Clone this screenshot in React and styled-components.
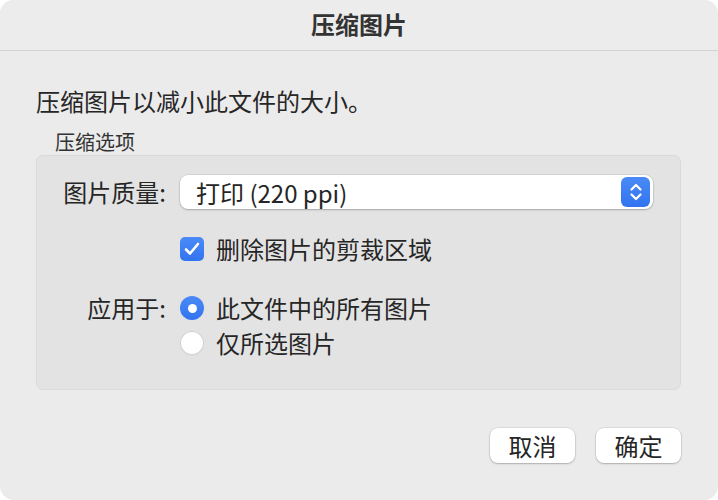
import React from "react";
import styled, { createGlobalStyle } from "styled-components";

const Global = createGlobalStyle`
  html, body { margin: 0; padding: 0; background: #ffffff; }
  body { font-family: "Noto Sans CJK SC", "Noto Sans", sans-serif; color: #262626; }
  * { box-sizing: border-box; }
`;

const Window = styled.div`
  width: 718px;
  height: 500px;
  border-radius: 14px;
  background: #ebebeb;
  overflow: hidden;
  display: flex;
  flex-direction: column;
`;

const TitleBar = styled.div`
  height: 51px;
  flex: none;
  background: #ececec;
  border-bottom: 1px solid #d3d3d3;
  display: flex;
  align-items: center;
  justify-content: center;
  font-size: 24px;
  font-weight: 600;
  color: #333333;
  padding-bottom: 4px;
`;

const Body = styled.div`
  padding: 35px 37px 0 36px;
  display: flex;
  flex-direction: column;
`;

const Intro = styled.div`
  font-size: 24px;
  line-height: 30px;
  margin-left: 0;
  color: #262626;
`;

const SectionLabel = styled.div`
  font-size: 20px;
  line-height: 24px;
  margin: 14px 0 1px 19px;
  color: #333333;
`;

const Panel = styled.div`
  height: 235px;
  background: #e3e3e3;
  border: 1px solid #dadada;
  border-radius: 7px;
  padding: 19px 27px 0 0;
  display: flex;
  flex-direction: column;
`;

const Row = styled.div`
  display: grid;
  grid-template-columns: 129px 1fr;
  column-gap: 14px;
  align-items: ${(p) => (p.$top ? "start" : "center")};
  margin-top: ${(p) => p.$mt || 0}px;
`;

const Label = styled.div`
  text-align: right;
  font-size: 24px;
  line-height: 24px;
  color: #262626;
`;

const Select = styled.div`
  height: 34px;
  background: #ffffff;
  border-radius: 8px;
  box-shadow: 0 0 0 0.5px rgba(0, 0, 0, 0.12), 0 1px 2px rgba(0, 0, 0, 0.22);
  display: flex;
  align-items: center;
  justify-content: space-between;
  padding: 0 3px 0 16px;
  font-size: 24px;
  color: #262626;
`;

const Stepper = styled.div`
  width: 29px;
  height: 30px;
  border-radius: 6px;
  background: linear-gradient(#4a8af7, #3274f0);
  display: flex;
  align-items: center;
  justify-content: center;
`;

const Options = styled.div`
  display: flex;
  flex-direction: column;
  gap: 11px;
`;

const Option = styled.div`
  display: flex;
  align-items: center;
  gap: 12px;
  font-size: 24px;
  line-height: 24px;
  color: #262626;
`;

const CheckBox = styled.div`
  width: 24px;
  height: 24px;
  border-radius: 5px;
  background: linear-gradient(#4a8af7, #3274f0);
  display: flex;
  align-items: center;
  justify-content: center;
  flex: none;
`;

const Radio = styled.div`
  width: 24px;
  height: 24px;
  border-radius: 50%;
  flex: none;
  display: flex;
  align-items: center;
  justify-content: center;
  background: ${(p) => (p.$on ? "linear-gradient(#4a8af7, #3274f0)" : "#ffffff")};
  box-shadow: ${(p) =>
    p.$on
      ? "none"
      : "inset 0 0 0 1px #cfcfcf, 0 0.5px 1px rgba(0,0,0,0.08)"};
`;

const Dot = styled.div`
  width: 9px;
  height: 9px;
  border-radius: 50%;
  background: #ffffff;
`;

const Buttons = styled.div`
  display: flex;
  justify-content: flex-end;
  gap: 21px;
  margin-top: 38px;
`;

const Button = styled.div`
  width: 85px;
  height: 35px;
  background: #ffffff;
  border-radius: 8px;
  box-shadow: 0 0 0 0.5px rgba(0, 0, 0, 0.12), 0 1px 2px rgba(0, 0, 0, 0.22);
  display: flex;
  align-items: center;
  justify-content: center;
  font-size: 24px;
  color: #262626;
`;

export default function App() {
  return (
    <>
      <Global />
      <Window>
        <TitleBar>压缩图片</TitleBar>
        <Body>
          <Intro>压缩图片以减小此文件的大小。</Intro>
          <SectionLabel>压缩选项</SectionLabel>
          <Panel>
            <Row>
              <Label>图片质量:</Label>
              <Select>
                <span>打印 (220 ppi)</span>
                <Stepper>
                  <svg width="14" height="20" viewBox="0 0 14 20" fill="none">
                    <path d="M2.5 7.5 L7 3 L11.5 7.5" stroke="#fff" strokeWidth="2.2" strokeLinecap="round" strokeLinejoin="round" />
                    <path d="M2.5 12.5 L7 17 L11.5 12.5" stroke="#fff" strokeWidth="2.2" strokeLinecap="round" strokeLinejoin="round" />
                  </svg>
                </Stepper>
              </Select>
            </Row>
            <Row $mt={28}>
              <div />
              <Option>
                <CheckBox>
                  <svg width="16" height="14" viewBox="0 0 16 14" fill="none">
                    <path d="M2 7.5 L6 11.5 L14 2" stroke="#fff" strokeWidth="2.6" strokeLinecap="round" strokeLinejoin="round" />
                  </svg>
                </CheckBox>
                删除图片的剪裁区域
              </Option>
            </Row>
            <Row $mt={35} $top>
              <Label>应用于:</Label>
              <Options>
                <Option>
                  <Radio $on>
                    <Dot />
                  </Radio>
                  此文件中的所有图片
                </Option>
                <Option>
                  <Radio />
                  仅所选图片
                </Option>
              </Options>
            </Row>
          </Panel>
          <Buttons>
            <Button>取消</Button>
            <Button>确定</Button>
          </Buttons>
        </Body>
      </Window>
    </>
  );
}
